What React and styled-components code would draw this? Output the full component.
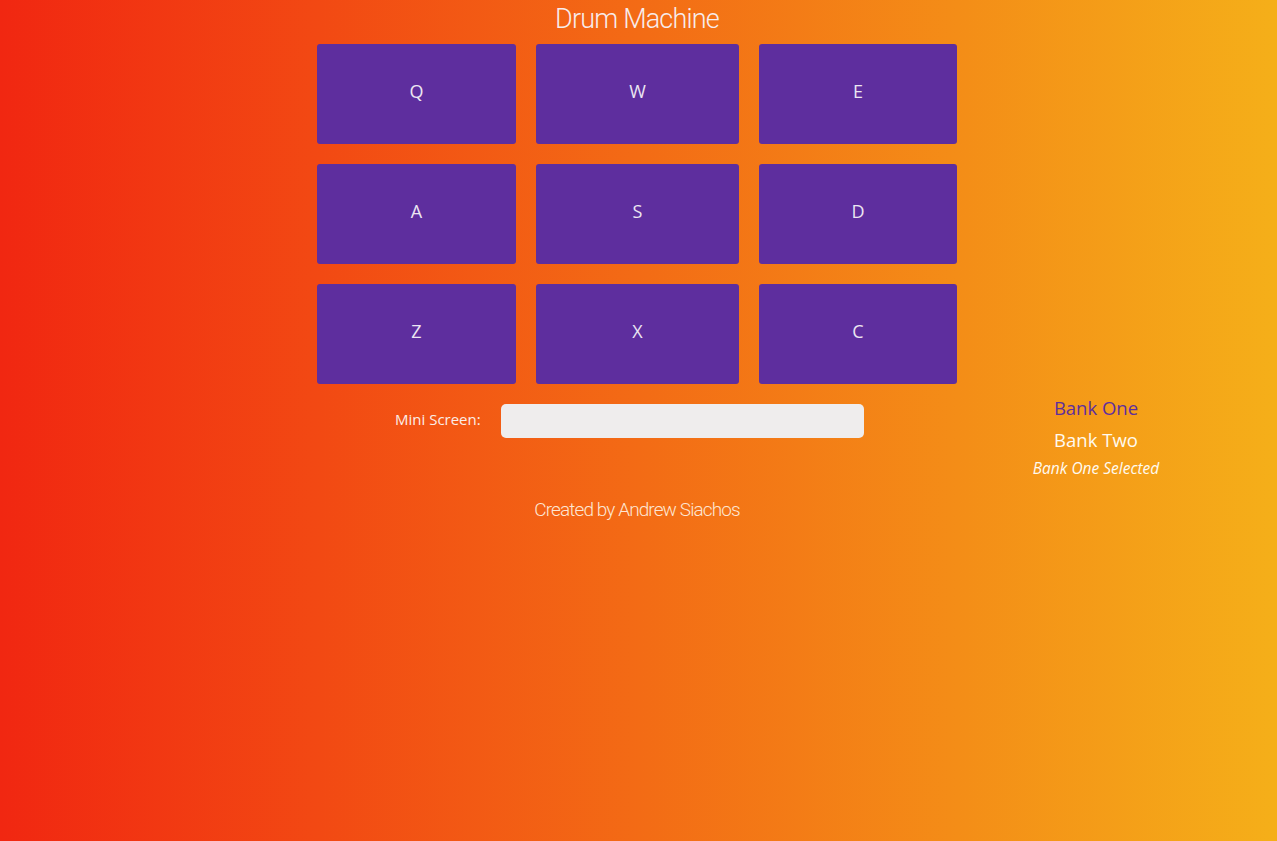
import React from 'react'
import styled, { createGlobalStyle } from 'styled-components'

const GlobalStyle = createGlobalStyle`
  html, body {
    margin: 0;
    padding: 0;
    min-height: 100%;
  }
  body {
    min-height: 100vh;
    background: linear-gradient(to right, #f12711, #f5af19);
    font-family: "Open Sans", "Noto Sans", sans-serif;
  }
`

const padKeys = ['Q', 'W', 'E', 'A', 'S', 'D', 'Z', 'X', 'C']

const Page = styled.div`
  display: flex;
  flex-direction: column;
  align-items: center;
  min-height: 100vh;
  padding-right: 3px;
`

const Title = styled.h1`
  margin: 0;
  height: 38px;
  line-height: 38px;
  font-family: Roboto, "Liberation Sans", sans-serif;
  font-weight: 300;
  font-size: 27px;
  letter-spacing: -0.8px;
  color: #f7ecec;
`

const Machine = styled.div`
  display: grid;
  grid-template-columns: 640px;
  justify-content: center;
  margin-top: 6px;
`

const PadGrid = styled.div`
  display: grid;
  grid-template-columns: 199px 203px 198px;
  grid-auto-rows: 100px;
  gap: 20px;
`

const Pad = styled.button`
  display: flex;
  align-items: center;
  justify-content: center;
  border: none;
  border-radius: 3px;
  background: #5e2e9e;
  color: #ece6f2;
  font-family: "Open Sans", "Noto Sans", sans-serif;
  font-size: 18px;
  padding: 0 0 6px;
  cursor: pointer;
`

const ControlRow = styled.div`
  position: relative;
  display: flex;
  align-items: center;
  margin-top: 20px;
  padding-left: 78px;
  gap: 20px;
`

const ScreenLabel = styled.label`
  font-size: 15px;
  color: #fbeee8;
  margin-top: -4px;
`

const Screen = styled.input`
  width: 363px;
  height: 34px;
  box-sizing: border-box;
  border: none;
  border-radius: 5px;
  background: #efeded;
  outline: none;
`

const Banks = styled.div`
  position: absolute;
  left: 699px;
  top: -13px;
  width: 160px;
  display: flex;
  flex-direction: column;
  align-items: center;
`

const BankButton = styled.button`
  border: none;
  background: none;
  padding: 0;
  height: 32px;
  font-family: "Open Sans", "Noto Sans", sans-serif;
  font-size: 18.5px;
  color: ${props => (props.active ? '#5e2e9e' : '#fffaf0')};
  cursor: pointer;
`

const BankStatus = styled.span`
  font-style: italic;
  font-size: 15.5px;
  color: #fffaf0;
  margin-top: 2px;
`

const Footer = styled.p`
  margin: 60px 0 0;
  font-family: Roboto, "Liberation Sans", sans-serif;
  font-weight: 300;
  font-size: 19px;
  letter-spacing: -0.9px;
  color: #fde6d3;
`

export default function App() {
  return (
    <>
      <GlobalStyle />
      <Page>
        <Title>Drum Machine</Title>
        <Machine>
          <PadGrid>
            {padKeys.map(key => (
              <Pad key={key}>{key}</Pad>
            ))}
          </PadGrid>
          <ControlRow>
            <ScreenLabel htmlFor="mini-screen">Mini Screen:</ScreenLabel>
            <Screen id="mini-screen" readOnly />
            <Banks>
              <BankButton active>Bank One</BankButton>
              <BankButton>Bank Two</BankButton>
              <BankStatus>Bank One Selected</BankStatus>
            </Banks>
          </ControlRow>
        </Machine>
        <Footer>Created by Andrew Siachos</Footer>
      </Page>
    </>
  )
}
